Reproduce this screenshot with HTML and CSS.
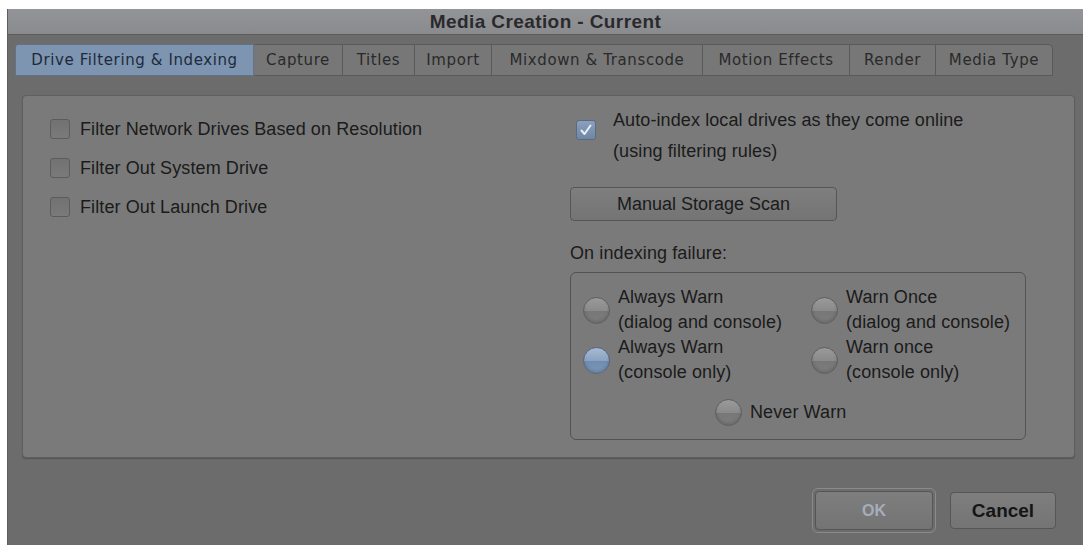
FILE: index.html
```html
<!DOCTYPE html>
<html lang="en">
<head>
  <meta charset="UTF-8" />
  <title>Media Creation - Current</title>
  <link rel="stylesheet" href="styles.css">
</head>
<body>
  <div class="window">
    <div class="titlebar">Media Creation - Current</div>

    <div class="tabs">
      <div class="tab active t1">Drive Filtering &amp; Indexing</div>
      <div class="tab t2">Capture</div>
      <div class="tab t3">Titles</div>
      <div class="tab t4">Import</div>
      <div class="tab t5">Mixdown &amp; Transcode</div>
      <div class="tab t6">Motion Effects</div>
      <div class="tab t7">Render</div>
      <div class="tab t8">Media Type</div>
    </div>

    <div class="panel">
      <div class="col-left">
        <label class="check"><span class="box"></span>Filter Network Drives Based on Resolution</label>
        <label class="check"><span class="box"></span>Filter Out System Drive</label>
        <label class="check"><span class="box"></span>Filter Out Launch Drive</label>
      </div>

      <div class="col-right">
        <label class="check auto">
          <span class="box checked">
            <svg width="14" height="14" viewBox="0 0 14 14"><path d="M2.5 7.5 L5.5 11 L11.5 2.5" fill="none" stroke="#e8eef6" stroke-width="2" stroke-linecap="round" stroke-linejoin="round"/></svg>
          </span>
          <span>Auto-index local drives as they come online<br>(using filtering rules)</span>
        </label>

        <button class="btn scan">Manual Storage Scan</button>

        <div class="caption">On indexing failure:</div>

        <div class="group">
          <div class="radios">
            <div class="radio"><span class="dot"></span><span>Always Warn<br>(dialog and console)</span></div>
            <div class="radio"><span class="dot"></span><span>Warn Once<br>(dialog and console)</span></div>
            <div class="radio"><span class="dot on"></span><span>Always Warn<br>(console only)</span></div>
            <div class="radio"><span class="dot"></span><span>Warn once<br>(console only)</span></div>
          </div>
          <div class="radio never"><span class="dot"></span><span>Never Warn</span></div>
        </div>
      </div>
    </div>

    <div class="footer">
      <div class="focus"><button class="btn ok">OK</button></div>
      <button class="btn cancel">Cancel</button>
    </div>
  </div>
</body>
</html>
```

FILE: styles.css
```css
* {
  box-sizing: border-box;
}
body {
  margin: 0;
  background: #fff;
  font-family: "Liberation Sans", Arial, sans-serif;
  color: #1b1b1b;
}
.window {
  margin: 9px 7px 0 7px;
  width: 1076px;
  height: 536px;
  background: #6c6c6c;
  display: flex;
  flex-direction: column;
  border-left: 1px solid #5e5e5e;
}
.titlebar {
  height: 26px;
  background: linear-gradient(#939498, #8a8b8e);
  border-bottom: 1px solid #5c5c5c;
  text-align: center;
  font-weight: bold;
  font-size: 19px;
  line-height: 25px;
  letter-spacing: 0.4px;
  color: #2a2a2c;
}

/* tabs */
.tabs {
  display: flex;
  margin: 9px 0 0 7px;
  height: 32px;
}
.tab {
  height: 32px;
  text-align: center;
  font-family: "DejaVu Sans", sans-serif;
  font-size: 15px;
  line-height: 30px;
  letter-spacing: 0.6px;
  color: #2a2a2a;
  background: #777777;
  border: 1px solid #5a5a5a;
  border-left: none;
  white-space: nowrap;
}
.t1 { width: 239px; }
.t2 { width: 89px; }
.t3 { width: 72px; }
.t4 { width: 77px; }
.t5 { width: 211px; }
.t6 { width: 147px; }
.t7 { width: 86px; }
.t8 { width: 117px; }
.tab:last-child {
  border-radius: 0 5px 0 0;
}
.tab.active {
  background: #7d95b1;
  border: 1px solid #62728a;
  border-radius: 3px 0 0 0;
  color: #1f2a3a;
}

/* main panel */
.panel {
  margin: 19px 8px 0 14px;
  height: 363px;
  background: #7a7a7a;
  border: 1px solid #5f5f5f;
  border-radius: 4px;
  box-shadow: 0 1px 1px #555;
  display: flex;
  padding: 17px 0 0 27px;
}
.col-left {
  width: 520px;
  display: flex;
  flex-direction: column;
  gap: 19px;
  padding-top: 6px;
}
.check {
  display: flex;
  align-items: center;
  font-size: 18px;
  letter-spacing: 0.1px;
  height: 20px;
}
.box {
  width: 20px;
  height: 20px;
  border: 1px solid #5c5c5c;
  border-radius: 3px;
  background: linear-gradient(#727272, #7a7a7a);
  margin-right: 10px;
  flex: none;
  display: flex;
  align-items: center;
  justify-content: center;
}
.box.checked {
  background: linear-gradient(#8aa0bd, #6f86a4);
  border-color: #5a6a80;
}
.col-right {
  display: flex;
  flex-direction: column;
  align-items: flex-start;
}
.check.auto {
  height: auto;
  align-items: flex-start;
  line-height: 31px;
  margin: -8px 0 0 6px;
}
.check.auto .box {
  margin-top: 15px;
  margin-right: 17px;
}
.btn {
  font-family: "Liberation Sans", Arial, sans-serif;
  font-size: 18px;
  color: #1b1b1b;
  background: linear-gradient(#7e7e7e, #747474);
  border: 1px solid #565656;
  border-radius: 4px;
  padding: 0;
}
.scan {
  width: 267px;
  height: 34px;
  margin-top: 20px;
}
.caption {
  font-size: 18px;
  margin-top: 22px;
  height: 20px;
  letter-spacing: 0.1px;
}
.group {
  margin-top: 9px;
  width: 456px;
  height: 168px;
  border: 1px solid #535353;
  border-radius: 6px;
  padding: 12px 0 0 12px;
}
.radios {
  display: grid;
  grid-template-columns: 228px 1fr;
}
.radio {
  display: flex;
  align-items: center;
  font-size: 18px;
  line-height: 25px;
  letter-spacing: 0.1px;
}
.dot {
  width: 27px;
  height: 27px;
  border-radius: 50%;
  border: 1px solid #5e5e5e;
  background: linear-gradient(#9a9a9a, #8a8a8a 50%, #777 51%, #7d7d7d);
  box-shadow: inset 0 -2px 3px rgba(0,0,0,0.15);
  margin-right: 8px;
  flex: none;
}
.dot.on {
  background: linear-gradient(#a6bbd4, #8ba3c2 50%, #6f8cb0 51%, #7b96b8);
  border-color: #56667c;
}
.never {
  margin: 12px 0 0 132px;
  height: 30px;
}

/* bottom buttons */
.footer {
  display: flex;
  justify-content: flex-end;
  align-items: center;
  padding: 30px 27px 0 0;
  gap: 14px;
}
.focus {
  padding: 2px;
  border: 1px solid #8b8b8b;
  border-radius: 6px;
}
.ok {
  width: 118px;
  height: 39px;
  color: #a5adbb;
  font-weight: bold;
  font-size: 16px;
}
.cancel {
  width: 106px;
  height: 37px;
  font-weight: bold;
  font-size: 19px;
  color: #151515;
}
```
